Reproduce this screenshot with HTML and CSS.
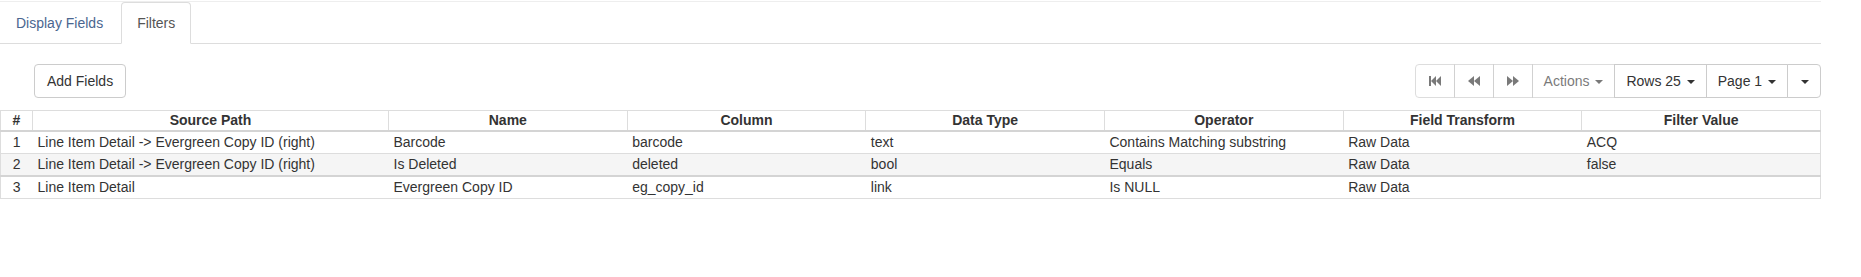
FILE: index.html
```html
<!DOCTYPE html>
<html lang="en">

<head>
    <meta charset="UTF-8">
    <title>Filters</title>
    <link rel="stylesheet" href="styles.css">
</head>

<body>
    <div class="page">
        <div class="topline"></div>

        <ul class="tabs">
            <li><a href="#">Display Fields</a></li>
            <li class="active"><a href="#">Filters</a></li>
        </ul>

        <div class="toolbar">
            <button class="btn">Add Fields</button>

            <div class="btn-group">
                <button class="btn icon" disabled>
                    <svg width="14" height="12" viewBox="0 0 14 12"><rect x="1" y="1" width="2" height="10"/><polygon points="3,6 8,1 8,11"/><polygon points="8,6 13,1 13,11"/></svg>
                </button>
                <button class="btn icon" disabled>
                    <svg width="14" height="12" viewBox="0 0 14 12"><polygon points="1,6 7,1 7,11"/><polygon points="7,6 13,1 13,11"/></svg>
                </button>
                <button class="btn icon" disabled>
                    <svg width="14" height="12" viewBox="0 0 14 12"><polygon points="13,6 7,1 7,11"/><polygon points="7,6 1,1 1,11"/></svg>
                </button>
                <button class="btn" disabled>Actions <span class="caret"></span></button>
                <button class="btn">Rows 25 <span class="caret"></span></button>
                <button class="btn">Page 1 <span class="caret"></span></button>
                <button class="btn caret-only"><span class="caret"></span></button>
            </div>
        </div>

        <table class="grid">
            <colgroup>
                <col class="c-num">
                <col class="c-path">
                <col><col><col><col><col><col>
            </colgroup>
            <thead>
                <tr>
                    <th>#</th>
                    <th>Source Path</th>
                    <th>Name</th>
                    <th>Column</th>
                    <th>Data Type</th>
                    <th>Operator</th>
                    <th>Field Transform</th>
                    <th>Filter Value</th>
                </tr>
            </thead>
            <tbody>
                <tr>
                    <td class="num">1</td>
                    <td>Line Item Detail -&gt; Evergreen Copy ID (right)</td>
                    <td>Barcode</td>
                    <td>barcode</td>
                    <td>text</td>
                    <td>Contains Matching substring</td>
                    <td>Raw Data</td>
                    <td>ACQ</td>
                </tr>
                <tr class="odd">
                    <td class="num">2</td>
                    <td>Line Item Detail -&gt; Evergreen Copy ID (right)</td>
                    <td>Is Deleted</td>
                    <td>deleted</td>
                    <td>bool</td>
                    <td>Equals</td>
                    <td>Raw Data</td>
                    <td>false</td>
                </tr>
                <tr>
                    <td class="num">3</td>
                    <td>Line Item Detail</td>
                    <td>Evergreen Copy ID</td>
                    <td>eg_copy_id</td>
                    <td>link</td>
                    <td>Is NULL</td>
                    <td>Raw Data</td>
                    <td></td>
                </tr>
            </tbody>
        </table>
    </div>
</body>

</html>
```

FILE: styles.css
```css
body,
ul,
li {
    padding: 0;
    margin: 0;
    list-style: none;
}

body {
    font-family: "Liberation Sans", Arial, sans-serif;
    font-size: 14px;
    color: #333;
    background: #fff;
}

.page {
    width: 1821px;
}

.topline {
    height: 1px;
    margin-top: 1px;
    background: #eee;
}

/* tabs */
.tabs {
    display: flex;
    border-bottom: 1px solid #ddd;
}

.tabs li {
    margin-bottom: -1px;
}

.tabs a {
    display: block;
    margin-right: 2px;
    padding: 10px 15px;
    line-height: 20px;
    border: 1px solid transparent;
    border-radius: 4px 4px 0 0;
    color: #4a6690;
    text-decoration: none;
}

.tabs .active a {
    color: #555;
    background: #fff;
    border-color: #ddd #ddd transparent;
}

/* toolbar row */
.toolbar {
    display: flex;
    justify-content: space-between;
    align-items: flex-start;
    margin-top: 20px;
    padding-left: 34px;
}

.btn {
    font-family: inherit;
    font-size: 14px;
    line-height: 20px;
    padding: 6px 12px;
    color: #333;
    background: #fff;
    border: 1px solid #ccc;
    border-radius: 4px;
}

.btn[disabled] {
    opacity: .65;
}

.btn-group {
    display: flex;
}

.btn-group .btn {
    padding: 6px 11px;
    border-radius: 0;
    margin-left: -1px;
}

.btn-group .btn.icon {
    padding: 6px 12px;
}

.btn-group .btn:first-child {
    margin-left: 0;
    border-radius: 4px 0 0 4px;
}

.btn-group .btn:last-child {
    border-radius: 0 4px 4px 0;
}

.btn.caret-only {
    height: 34px;
}

.btn.icon svg {
    display: block;
    margin: 4px 0;
    fill: currentColor;
}

.caret {
    display: inline-block;
    width: 0;
    height: 0;
    margin-left: 2px;
    vertical-align: middle;
    border-top: 4px solid;
    border-left: 4px solid transparent;
    border-right: 4px solid transparent;
}

/* grid */
.grid {
    width: 1821px;
    margin-top: 12px;
    table-layout: fixed;
    border-collapse: collapse;
    border: 1px solid #ddd;
}

.c-num {
    width: 32px;
}

.c-path {
    width: 356px;
}

.grid th {
    padding: 1px 5px;
    line-height: 17px;
    font-weight: bold;
    text-align: center;
    border: 1px solid #ddd;
    border-bottom: 2px solid #d4d4d4;
}

.grid td {
    padding: 2px 5px;
    line-height: 17px;
    text-align: left;
    white-space: nowrap;
    border-top: 1px solid #ddd;
}

.grid td.num {
    text-align: center;
}

.grid .odd td {
    background: #f5f5f5;
    border-bottom: 2px solid #d4d4d4;
}
```
